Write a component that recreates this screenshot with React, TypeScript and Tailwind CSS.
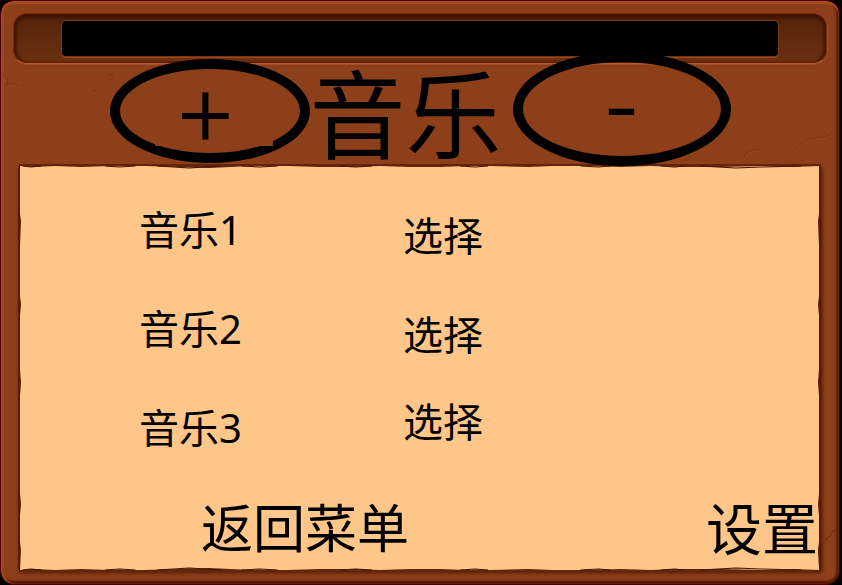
const tracks = [
  { name: '音乐1', row: 'mt-[34px]', label: 'self-start', pick: 'self-end' },
  { name: '音乐2', row: 'mt-[33px]', label: 'self-start', pick: 'self-end' },
  { name: '音乐3', row: 'mt-[27px]', label: 'self-end', pick: 'self-start' },
];

function TornEdge({ className }: { className: string }) {
  return (
    <svg
      aria-hidden="true"
      viewBox="0 0 800 6"
      preserveAspectRatio="none"
      className={`pointer-events-none absolute inset-x-0 h-[6px] w-full ${className}`}
    >
      <path
        d="M0 0H800V2L770 3L740 2L700 3L662 3L630 2L600 3L570 2H532L508 3L470 2H445L420 3H390L360 2L328 3H300L268 2H232L190 4L160 3L125 2H92L62 3L36 2L15 3L0 2Z"
        fill="#63250b"
      />
      <path
        d="M4 2L12 3L22 2M86 2L100 3L116 2M138 2L170 4L202 2M222 2L240 3L258 2M320 2L336 3L352 2M440 2L455 3L468 2M560 2L578 3L590 2M640 2L654 3L664 2M680 2L715 4L740 3L780 2"
        fill="none"
        stroke="#481004"
        strokeWidth="1"
      />
    </svg>
  );
}

function SideEdge({ className }: { className: string }) {
  return (
    <svg
      aria-hidden="true"
      viewBox="0 0 4 404"
      preserveAspectRatio="none"
      className={`pointer-events-none absolute inset-y-0 h-full w-[4px] ${className}`}
    >
      <path
        d="M0 0H2V48L3 55L2 80V130L3 138L2 150V204L3 216L2 230V328L3 338L2 350V376L3 384L2 404H0Z"
        fill="#571a07"
      />
    </svg>
  );
}

function Cracks() {
  return (
    <>
      <svg aria-hidden="true" viewBox="0 0 120 40" className="pointer-events-none absolute top-[70px] left-0 h-[40px] w-[120px]" fill="none">
        <path d="M1 6L5 9L3 13M6 15L20 11" stroke="#a04b28" />
        <path d="M2 5L7 9L5 14L16 12" stroke="#7d3314" />
        <path d="M107 4Q110 3 112 6L109 9M92 19L95 20" stroke="#7b3314" />
      </svg>
      <svg aria-hidden="true" viewBox="0 0 100 40" className="pointer-events-none absolute top-[125px] right-0 h-[40px] w-[100px]" fill="none">
        <path d="M4 32L8 26L22 23M56 24L67 14L77 12L86 11L96 6" stroke="#803615" />
        <path d="M5 33L9 27L23 24M57 25L68 15L78 13L87 12L97 7" stroke="#984620" />
      </svg>
      <svg aria-hidden="true" viewBox="0 0 16 20" className="pointer-events-none absolute right-0 bottom-[40px] h-[20px] w-[16px]" fill="none">
        <path d="M2 16L7 12L9 8L14 5" stroke="#70290e" />
      </svg>
    </>
  );
}

export default function App() {
  return (
    <div className="flex min-h-screen flex-col bg-black pr-0.5 font-['Noto_Sans','Noto_Sans_CJK_SC',sans-serif] text-black">
      <main className="relative flex grow flex-col rounded-[14px] border border-[#4d0000] bg-[#8c3f18] px-3 pt-3 pb-[14px] shadow-[inset_0_3px_1px_#a54c2b,inset_3px_0_1px_#994628,inset_-3px_0_2px_#59200c,inset_0_-3px_2px_#4d1607]">
        <Cracks />
        <div className="rounded-[14px] border border-[#762b10] border-b-[#b55a31] bg-linear-to-b from-[#54230a] to-[#6b3210] px-12 py-[7px] shadow-[inset_0_4px_3px_#401303,inset_3px_0_3px_#451805,inset_-3px_0_3px_#451805,inset_0_-3px_2px_#74300f,0_1px_1px_#a64c28,1px_0_1px_#a64c28]">
          <div className="h-[35px] rounded-[4px] bg-black shadow-[0_0_0_1px_#793315,0_2px_1px_#a04a22]" />
        </div>

        <header className="relative z-10 -mt-[12px] flex h-[114px] justify-center">
          <button
            type="button"
            aria-label="+"
            className="mb-[3px] flex h-[104px] w-[200px] shrink-0 justify-center self-end rounded-[50%] border-[10px] border-black pt-[19px]"
          >
            <span className="ml-2 h-[58px] w-[118px] bg-[#8c3f18] pr-4 font-['Open_Sans',sans-serif] text-[96px] leading-[50px] font-light [-webkit-text-stroke:2px_black]">+</span>
          </button>
          <h1 className="w-[203px] shrink-0 text-[96px] leading-[124px] whitespace-nowrap">音乐</h1>
          <button
            type="button"
            aria-label="-"
            className="flex h-[114px] w-[218px] shrink-0 justify-center rounded-[50%] border-[10px] border-black font-['Open_Sans',sans-serif] text-[96px] leading-[78px] font-light [-webkit-text-stroke:2px_black]"
          >
            -
          </button>
        </header>

        <section className="relative mx-[6px] flex grow flex-col bg-[#fec688] shadow-[0_3px_3px_#5a230b,2px_2px_3px_#66290e]">
          <TornEdge className="-top-[2px]" />
          <TornEdge className="-bottom-[2px] -scale-y-100" />
          <SideEdge className="-left-px" />
          <SideEdge className="right-0 -scale-x-100" />
          <ul className="pl-[120px] text-[40px] leading-[60px]">
            {tracks.map((track) => (
              <li key={track.name} className={`flex h-[66px] ${track.row}`}>
                <span className={`w-[264px] ${track.label}`}>{track.name}</span>
                <button type="button" aria-label={`选择 ${track.name}`} className={track.pick}>
                  选择
                </button>
              </li>
            ))}
          </ul>
          <footer className="mt-auto flex items-center justify-between pr-[3px] pb-[6px] pl-[182px]">
            <button type="button" className="text-[52px] leading-[72px]">返回菜单</button>
            <button type="button" className="text-[56px] leading-[72px]">设置</button>
          </footer>
        </section>
      </main>
    </div>
  );
}
